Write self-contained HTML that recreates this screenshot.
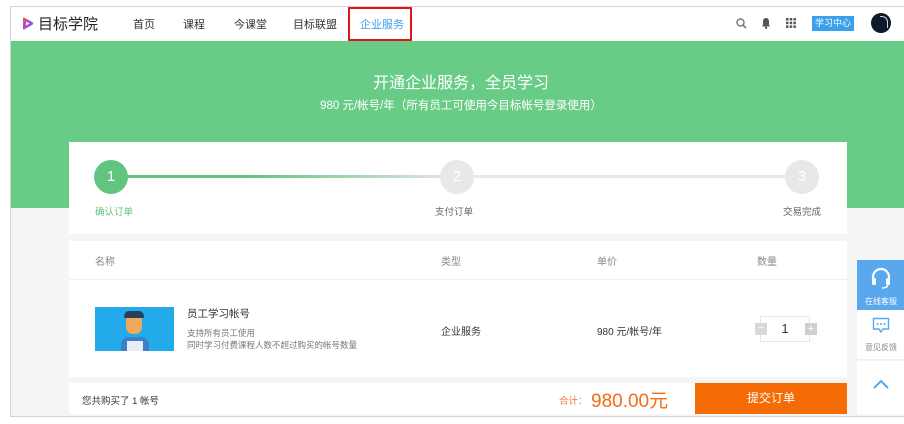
<!DOCTYPE html>
<html><head><meta charset="utf-8"><style>
*{margin:0;padding:0;box-sizing:border-box}
body{width:904px;height:424px;overflow:hidden;background:#fff;font-family:"Liberation Sans","Noto Sans CJK SC",sans-serif;position:relative}
.frame{position:absolute;left:10px;top:6px;width:900px;height:411px;border:1px solid #d4d4d4;background:#f5f5f5;overflow:hidden}
.a{position:absolute}
.hdr{left:0;top:0;width:900px;height:34px;background:#fff}
.nav{font-size:11px;color:#333;top:9px}
.green{left:0;top:34px;width:900px;height:167px;background:#69cc86}
.card{background:#fff}
.t{position:absolute;white-space:nowrap}
</style></head><body>
<div class="frame">
<div class="a hdr">
 <svg class="a" style="left:11px;top:10px" width="12" height="13" viewBox="0 0 12 13"><defs><linearGradient id="g" x1="0" y1="0" x2="1" y2="1"><stop offset="0" stop-color="#f5533d"/><stop offset=".5" stop-color="#a64bd8"/><stop offset="1" stop-color="#3a8ff0"/></linearGradient></defs><path d="M1 1.5Q1 0 2.5 .8L10.5 5.3Q12 6.5 10.5 7.7L2.5 12.2Q1 13 1 11.5Z" fill="url(#g)"/><path d="M4 4.5L7.5 6.5L4 8.5Z" fill="#fff"/></svg>
 <div class="t" style="left:27px;top:6px;font-size:15px;color:#222">目标学院</div>
 <div class="t nav" style="left:122px">首页</div>
 <div class="t nav" style="left:172px">课程</div>
 <div class="t nav" style="left:223px">今课堂</div>
 <div class="t nav" style="left:282px">目标联盟</div>
 <div class="t nav" style="left:349px;color:#3aa0e6">企业服务</div>
 <div class="a" style="left:337px;top:0;width:64px;height:34px;border:2px solid #e0141b"></div>
 <svg class="a" style="left:725px;top:11px" width="11" height="11"><circle cx="4.5" cy="4.5" r="3.5" stroke="#777" stroke-width="1.4" fill="none"/><path d="M7 7L10 10" stroke="#777" stroke-width="1.6"/></svg>
 <svg class="a" style="left:750px;top:10px" width="10" height="12"><path d="M5 1C2.5 1 2 3 2 5V8L1 9.5H9L8 8V5C8 3 7.5 1 5 1Z" fill="#555"/><circle cx="5" cy="10.8" r="1.2" fill="#555"/></svg>
 <svg class="a" style="left:775px;top:11px" width="10" height="10" fill="#555"><rect x="0" y="0" width="2.5" height="2.5"/><rect x="3.7" y="0" width="2.5" height="2.5"/><rect x="7.4" y="0" width="2.5" height="2.5"/><rect x="0" y="3.7" width="2.5" height="2.5"/><rect x="3.7" y="3.7" width="2.5" height="2.5"/><rect x="7.4" y="3.7" width="2.5" height="2.5"/><rect x="0" y="7.4" width="2.5" height="2.5"/><rect x="3.7" y="7.4" width="2.5" height="2.5"/><rect x="7.4" y="7.4" width="2.5" height="2.5"/></svg>
 <div class="a" style="left:801px;top:9px;width:42px;height:15px;background:#3ba0ea;color:#fff;font-size:9px;text-align:center;line-height:15px">学习中心</div>
 <div class="a" style="left:860px;top:6px;width:20px;height:20px;border-radius:50%;background:#0e1a2c;overflow:hidden"><div class="a" style="left:9px;top:3px;width:8px;height:12px;border:1.5px solid #cfd8e0;border-left:none;border-bottom:none;border-radius:0 6px 0 0"></div></div>
</div>
<div class="a green">
 <div class="t" style="left:0;width:900px;text-align:center;top:28px;font-size:16px;color:#fff">开通企业服务，全员学习</div>
 <div class="t" style="left:0;width:900px;text-align:center;top:56px;font-size:11.5px;color:#fff">980 元/帐号/年（所有员工可使用今目标帐号登录使用）</div>
</div>
<div class="a card" style="left:58px;top:135px;width:778px;height:92px">
 <div class="a" style="left:42px;top:33px;width:344px;height:3px;background:linear-gradient(90deg,#62c57f,#62c57f 40%,#e6e6e6)"></div>
 <div class="a" style="left:388px;top:33px;width:340px;height:3px;background:#e8e8e8"></div>
 <div class="a" style="left:25px;top:18px;width:34px;height:34px;border-radius:50%;background:#62c57f;color:#fff;font-size:15px;text-align:center;line-height:34px">1</div>
 <div class="a" style="left:371px;top:18px;width:34px;height:34px;border-radius:50%;background:#e8e8e8;color:#fff;font-size:15px;text-align:center;line-height:34px">2</div>
 <div class="a" style="left:716px;top:18px;width:34px;height:34px;border-radius:50%;background:#e8e8e8;color:#fff;font-size:15px;text-align:center;line-height:34px">3</div>
 <div class="t" style="left:26px;top:62px;font-size:9.5px;color:#62c57f">确认订单</div>
 <div class="t" style="left:366px;top:62px;font-size:9.5px;color:#666">支付订单</div>
 <div class="t" style="left:714px;top:62px;font-size:9.5px;color:#666">交易完成</div>
</div>
<div class="a card" style="left:58px;top:234px;width:778px;height:136px">
 <div class="t" style="left:26px;top:12px;font-size:10px;color:#888">名称</div>
 <div class="t" style="left:372px;top:12px;font-size:10px;color:#888">类型</div>
 <div class="t" style="left:528px;top:12px;font-size:10px;color:#888">单价</div>
 <div class="t" style="left:688px;top:12px;font-size:10px;color:#888">数量</div>
 <div class="a" style="left:0;top:38px;width:778px;height:1px;background:#f0f0f0"></div>
 <div class="a" style="left:26px;top:66px;width:79px;height:44px;background:#22aaea;overflow:hidden">
  <div class="a" style="left:26px;top:30px;width:28px;height:16px;background:#3c7fc4;border-radius:8px 8px 0 0"></div>
  <div class="a" style="left:31px;top:7px;width:16px;height:20px;background:#f1a95a;border-radius:7px"></div>
  <div class="a" style="left:29px;top:4px;width:20px;height:7px;background:#2c3e58;border-radius:6px 6px 2px 2px"></div>
  <div class="a" style="left:32px;top:34px;width:16px;height:10px;background:#e8eef5"></div>
 </div>
 <div class="t" style="left:118px;top:65px;font-size:10.5px;color:#333">员工学习帐号</div>
 <div class="t" style="left:118px;top:86px;font-size:8.5px;color:#777">支持所有员工使用</div>
 <div class="t" style="left:118px;top:98px;font-size:8.5px;color:#777">同时学习付费课程人数不超过购买的帐号数量</div>
 <div class="t" style="left:372px;top:82px;font-size:10px;color:#333">企业服务</div>
 <div class="t" style="left:528px;top:82px;font-size:10px;color:#333">980 元/帐号/年</div>
 <div class="a" style="left:691px;top:75px;width:50px;height:26px;border:1px solid #e6e6e6;font-size:13px;text-align:center;line-height:24px;color:#333">1</div>
 <div class="a" style="left:686px;top:82px;width:12px;height:12px;background:#d8d8d8;color:#fff;font-size:11px;line-height:11px;text-align:center">−</div>
 <div class="a" style="left:736px;top:82px;width:12px;height:12px;background:#cfcfcf;color:#fff;font-size:11px;line-height:12px;text-align:center">+</div>
</div>
<div class="a card" style="left:58px;top:376px;width:778px;height:31px">
 <div class="t" style="left:13px;top:10px;font-size:9.5px;color:#333">您共购买了 1 帐号</div>
 <div class="t" style="left:490px;top:10px;font-size:9.5px;color:#f07a3a">合计：</div>
 <div class="t" style="left:522px;top:3px;font-size:19px;color:#f26b15">980.00元</div>
 <div class="a" style="left:626px;top:0;width:152px;height:31px;background:#f56b05;color:#fff;font-size:12px;text-align:center;line-height:31px">提交订单</div>
</div>
<div class="a" style="left:846px;top:253px;width:48px;height:50px;background:#59a7ec">
 <svg class="a" style="left:13px;top:7px" width="22" height="22" viewBox="0 0 22 22"><path d="M3 13V10A8 8 0 0 1 19 10V13" stroke="#fff" stroke-width="2.2" fill="none"/><rect x="2" y="11" width="4" height="7" rx="1.5" fill="#fff"/><rect x="16" y="11" width="4" height="7" rx="1.5" fill="#fff"/><path d="M18 18Q17 21 12 21" stroke="#fff" stroke-width="1.5" fill="none"/></svg>
 <div class="t" style="left:0;width:48px;text-align:center;top:36px;font-size:8px;color:#fff">在线客服</div>
</div>
<div class="a" style="left:846px;top:303px;width:48px;height:50px;background:#fff;border-bottom:1px solid #eee">
 <svg class="a" style="left:15px;top:7px" width="18" height="17" viewBox="0 0 18 17"><path d="M1.5 1.5H16.5V12H11L9 15L7 12H1.5Z" stroke="#59a7ec" stroke-width="1.4" fill="none"/><circle cx="5.5" cy="7" r="1" fill="#59a7ec"/><circle cx="9" cy="7" r="1" fill="#59a7ec"/><circle cx="12.5" cy="7" r="1" fill="#59a7ec"/></svg>
 <div class="t" style="left:0;width:48px;text-align:center;top:32px;font-size:8px;color:#888">意见反馈</div>
</div>
<div class="a" style="left:846px;top:354px;width:48px;height:53px;background:#fff">
 <svg class="a" style="left:16px;top:18px" width="16" height="10"><path d="M1 9L8 2L15 9" stroke="#59a7ec" stroke-width="2" fill="none"/></svg>
</div>
</div>
</body></html>
